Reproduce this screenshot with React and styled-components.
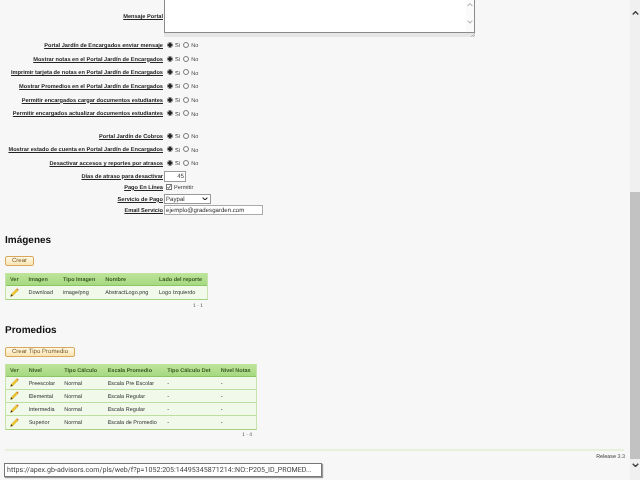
import React from "react";
import styled, { createGlobalStyle } from "styled-components";

const Global = createGlobalStyle`
  html, body { margin: 0; padding: 0; height: 480px; overflow: hidden; background: #f7f7f7; }
  body { font-family: "Liberation Sans", Arial, sans-serif; font-size: 7px; color: #222; text-rendering: geometricPrecision; }
`;

const Viewport = styled.div`
  position: relative;
  display: flex;
  width: 640px;
  height: 480px;
  overflow: hidden;
  filter: blur(0.3px);
`;
const Main = styled.main`
  width: 630px;
  display: flex;
  flex-direction: column;
  padding: 0 5px;
  box-sizing: border-box;
`;
const Form = styled.div`
  display: flex;
  flex-direction: column;
  margin-left: -5px;
`;
const Row = styled.div`
  display: grid;
  grid-template-columns: 163px 1fr;
  column-gap: 1px;
  align-items: center;
  height: ${p => p.$h || 13.7}px;
  margin-bottom: ${p => p.$mb || 0}px;
`;
const Label = styled.label`
  text-align: right;
  font-weight: 700;
  font-size: 5.65px;
  margin-top: 2px;
  text-decoration: underline;
  color: #222;
  white-space: nowrap;
`;
const TopLabel = styled(Label)`
  align-self: start;
  margin-top: 14px;
`;
const TextAreaBox = styled.div`
  position: relative;
  width: 311px;
  height: 37px;
  align-self: start;
  background: #e6e6e6;
`;
const TextAreaInner = styled.div`
  height: 33px;
  box-sizing: border-box;
  background: #fff;
  border: 1px solid #8a8a8a;
  border-top: 0;
  display: flex;
  justify-content: flex-end;
`;
const AreaBar = styled.div`
  width: 8px;
  display: flex;
  flex-direction: column;
  align-items: center;
  padding-top: 3px;
  gap: 13.4px;
  background: #fbfbfb;
`;
const Grip = styled.svg`
  position: absolute;
  right: 0;
  bottom: 0;
`;
const Controls = styled.div`
  display: flex;
  align-items: center;
  padding-left: 3px;
  gap: 3px;
`;
const Radio = styled.span`
  width: 6px;
  height: 6px;
  box-sizing: border-box;
  border-radius: 50%;
  border: 1px solid #777;
  background: ${p => (p.$on ? "radial-gradient(circle, #222 0 1.6px, #fff 1.8px)" : "#fff")};
`;
const RadioText = styled.span`
  font-size: 5.6px;
  color: #444;
  margin-left: -1px;
  margin-top: 3px;
`;
const NumberBox = styled.div`
  width: 22px;
  height: 11px;
  margin-top: 1px;
  box-sizing: border-box;
  border: 1px solid #9a9a9a;
  background: #fff;
  text-align: right;
  padding-right: 1px;
  font-size: 6.1px;
  line-height: 10px;
  color: #333;
`;
const CheckRow = styled.div`
  display: flex;
  align-items: center;
  gap: 2px;
  padding-left: 2px;
  font-size: 5.6px;
  color: #333;
`;
const CheckText = styled.span`
  margin-top: 2px;
`;
const Check = styled.span`
  width: 6px;
  height: 6px;
  box-sizing: border-box;
  border: 1px solid #777;
  background: #fff;
  display: flex;
`;
const SelectBox = styled.div`
  width: 47px;
  height: 10px;
  box-sizing: border-box;
  border: 1px solid #999;
  background: #fff;
  display: flex;
  justify-content: space-between;
  align-items: center;
  padding: 0 2px 0 1px;
  font-size: 6.1px;
  color: #333;
`;
const SelectText = styled.span`
  margin-top: 2px;
`;
const EmailBox = styled.div`
  width: 99px;
  height: 10px;
  box-sizing: border-box;
  border: 1px solid #aaa;
  background: #fff;
  padding-left: 1px;
  font-size: 6.1px;
  line-height: 9px;
  color: #333;
`;
const Heading = styled.h2`
  margin: ${p => p.$mt}px 0 0;
  font-size: 10px;
  line-height: 12px;
  font-weight: 700;
  color: #111;
`;
const Button = styled.div`
  width: ${p => p.$w}px;
  height: 10px;
  margin-top: ${p => p.$mt}px;
  box-sizing: border-box;
  border: 1px solid #d9a85c;
  border-radius: 2px;
  background: linear-gradient(#fff9e8, #f9e4b2);
  color: #7a5a20;
  text-align: center;
  font-size: 6.1px;
  line-height: 8px;
`;
const Table = styled.div`
  width: ${p => p.$w}px;
  margin-top: ${p => p.$mt}px;
  border-bottom: 1px solid #a5d27c;
  border-right: 1px solid #c5e3aa;
  border-left: 1px solid #c5e3aa;
  box-sizing: border-box;
`;
const TRow = styled.div`
  display: grid;
  grid-template-columns: ${p => p.$cols};
  align-items: center;
  height: ${p => p.$h}px;
  box-sizing: border-box;
  padding-left: 4px;
  background: ${p => (p.$head ? "linear-gradient(#bfe49b, #a5d981)" : "#f1f9ea")};
  border-bottom: 1px solid ${p => (p.$head ? "#8cc662" : "#bcdfa0")};
  font-size: 5.5px;
  color: ${p => (p.$head ? "#3a5a22" : "#333")};
  font-weight: ${p => (p.$head ? 700 : 400)};
  white-space: nowrap;
  &:last-child { border-bottom: 0; }
`;
const Cell = styled.span`
  padding-top: 2px;
`;
const Pager = styled.div`
  width: ${p => p.$w}px;
  text-align: right;
  font-size: 5px;
  line-height: 6px;
  color: #555;
  margin-top: ${p => p.$mt}px;
`;
const Divider = styled.div`
  height: 2px;
  margin-top: 11px;
  width: 619px;
  background: #e6f1da;
`;
const Release = styled.div`
  width: 620px;
  text-align: right;
  font-size: 5.4px;
  margin-top: 3px;
  color: #444;
`;
const Scrollbar = styled.aside`
  width: 10px;
  background: #f0f0f0;
  display: flex;
  flex-direction: column;
  align-items: center;
`;
const ScrollTop = styled.div`
  height: 192px;
  width: 100%;
  padding-top: 11px;
  box-sizing: border-box;
  display: flex;
  justify-content: center;
`;
const Thumb = styled.div`
  height: 267px;
  width: 100%;
  background: #c2c2c2;
`;
const ScrollBottom = styled.div`
  padding-top: 3px;
`;
const StatusTip = styled.div`
  position: absolute;
  left: 4px;
  top: 463px;
  width: 318px;
  height: 14px;
  box-sizing: border-box;
  background: #fff;
  border: 1px solid #777;
  box-shadow: 1px 1px 1px #999;
  font-family: Roboto, sans-serif;
  font-size: 7.1px;
  line-height: 12px;
  padding-left: 2px;
  color: #444;
  white-space: nowrap;
  overflow: hidden;
`;

const Chevron = ({ up, color = "#555", w = 8, sw = 1.4 }) => (
  <svg width={w} height={w * 0.6} viewBox="0 0 10 6">
    <path d={up ? "M1 5L5 1L9 5" : "M1 1L5 5L9 1"} fill="none" stroke={color} strokeWidth={sw * 1.3} />
  </svg>
);
const Pencil = () => (
  <svg width="9" height="9" viewBox="0 0 9 9">
    <path d="M0.6 8.4L1.3 6.2L6.5 1L8 2.5L2.8 7.7Z" fill="#f2c928" stroke="#b58a12" strokeWidth="0.4" />
    <path d="M6.5 1L7.3 0.4L8.6 1.7L8 2.5Z" fill="#d8502c" />
    <path d="M0.6 8.4L1.3 6.2L2.8 7.7Z" fill="#333" />
  </svg>
);

const YesNo = () => (
  <Controls>
    <Radio $on />
    <RadioText>Sí</RadioText>
    <Radio />
    <RadioText>No</RadioText>
  </Controls>
);

const group1 = [
  "Portal Jardín de Encargados enviar mensaje",
  "Mostrar notas en el Portal Jardín de Encargados",
  "Imprimir tarjeta de notas en Portal Jardín de Encargados",
  "Mostrar Promedios en el Portal Jardín de Encargados",
  "Permitir encargados cargar documentos estudiantes",
  "Permitir encargados actualizar documentos estudiantes",
];
const group2 = [
  "Portal Jardín de Cobros",
  "Mostrar estado de cuenta en Portal Jardín de Encargados",
  "Desactivar accesos y reportes por atrasos",
];

const imgCols = "18.5px 34.5px 42.3px 53.7px 1fr";
const avgCols = "18.7px 35.6px 43.4px 59.6px 53.4px 1fr";
const avgRows = [
  ["Preescolar", "Normal", "Escala Pre Escolar", "-", "-"],
  ["Elemental", "Normal", "Escala Regular", "-", "-"],
  ["Intermedia", "Normal", "Escala Regular", "-", "-"],
  ["Superior", "Normal", "Escala de Promedio", "-", "-"],
];

export default function App() {
  return (
    <>
      <Global />
      <Viewport>
        <Main>
          <Form>
            <Row $h={38}>
              <TopLabel>Mensaje Portal</TopLabel>
              <TextAreaBox>
                <TextAreaInner>
                  <AreaBar>
                    <Chevron up color="#bbb" w={6} />
                    <Chevron color="#bbb" w={6} />
                  </AreaBar>
                </TextAreaInner>
                <Grip width="4" height="4" viewBox="0 0 4 4">
                  <path d="M0 4L4 0M2 4L4 2" stroke="#999" strokeWidth="0.6" />
                </Grip>
              </TextAreaBox>
            </Row>
            {group1.map((t, i) => (
              <Row key={t} $mb={i === group1.length - 1 ? 9 : 0}>
                <Label>{t}</Label>
                <YesNo />
              </Row>
            ))}
            {group2.map(t => (
              <Row key={t} $h={13.5}>
                <Label>{t}</Label>
                <YesNo />
              </Row>
            ))}
            <Row $h={11}>
              <Label>Días de atraso para desactivar</Label>
              <NumberBox>45</NumberBox>
            </Row>
            <Row $h={12}>
              <Label>Pago En Línea</Label>
              <CheckRow>
                <Check>
                  <svg width="4" height="4" viewBox="0 0 4 4">
                    <path d="M0.4 2L1.6 3.4L3.6 0.4" stroke="#333" strokeWidth="0.8" fill="none" />
                  </svg>
                </Check>
                <CheckText>Permitir</CheckText>
              </CheckRow>
            </Row>
            <Row $h={12}>
              <Label>Servicio de Pago</Label>
              <SelectBox>
                <SelectText>Paypal</SelectText>
                <Chevron color="#333" w={6} />
              </SelectBox>
            </Row>
            <Row $h={9}>
              <Label>Email Servicio</Label>
              <EmailBox>ejemplo@gradesgarden.com</EmailBox>
            </Row>
          </Form>

          <Heading $mt={21}>Imágenes</Heading>
          <Button $w={29} $mt={9}>Crear</Button>
          <Table $w={203} $mt={7}>
            <TRow $head $h={13} $cols={imgCols}>
              <Cell>Ver</Cell><Cell>Imagen</Cell><Cell>Tipo Imagen</Cell><Cell>Nombre</Cell><Cell>Lado del reporte</Cell>
            </TRow>
            <TRow $h={13} $cols={imgCols}>
              <Pencil /><Cell>Download</Cell><Cell>image/png</Cell><Cell>AbstractLogo.png</Cell><Cell>Logo Izquierdo</Cell>
            </TRow>
          </Table>
          <Pager $w={198} $mt={3}>1 - 1</Pager>

          <Heading $mt={16}>Promedios</Heading>
          <Button $w={70} $mt={10}>Crear Tipo Promedio</Button>
          <Table $w={252} $mt={7}>
            <TRow $head $h={13} $cols={avgCols}>
              <Cell>Ver</Cell><Cell>Nivel</Cell><Cell>Tipo Cálculo</Cell><Cell>Escala Promedio</Cell><Cell>Tipo Cálculo Det</Cell><Cell>Nivel Notas</Cell>
            </TRow>
            {avgRows.map(r => (
              <TRow key={r[0]} $h={13} $cols={avgCols}>
                <Pencil />
                {r.map((c, i) => <Cell key={i}>{c}</Cell>)}
              </TRow>
            ))}
          </Table>
          <Pager $w={247} $mt={2}>1 - 4</Pager>

          <Divider />
          <Release>Release 3.3</Release>
        </Main>
        <Scrollbar>
          <ScrollTop><Chevron up color="#444" w={7} sw={1.6} /></ScrollTop>
          <Thumb />
          <ScrollBottom><Chevron color="#444" w={7} sw={1.6} /></ScrollBottom>
        </Scrollbar>
        <StatusTip>https://apex.gb-advisors.com/pls/web/f?p=1052:205:14495345871214::NO::P205_ID_PROMED...</StatusTip>
      </Viewport>
    </>
  );
}
